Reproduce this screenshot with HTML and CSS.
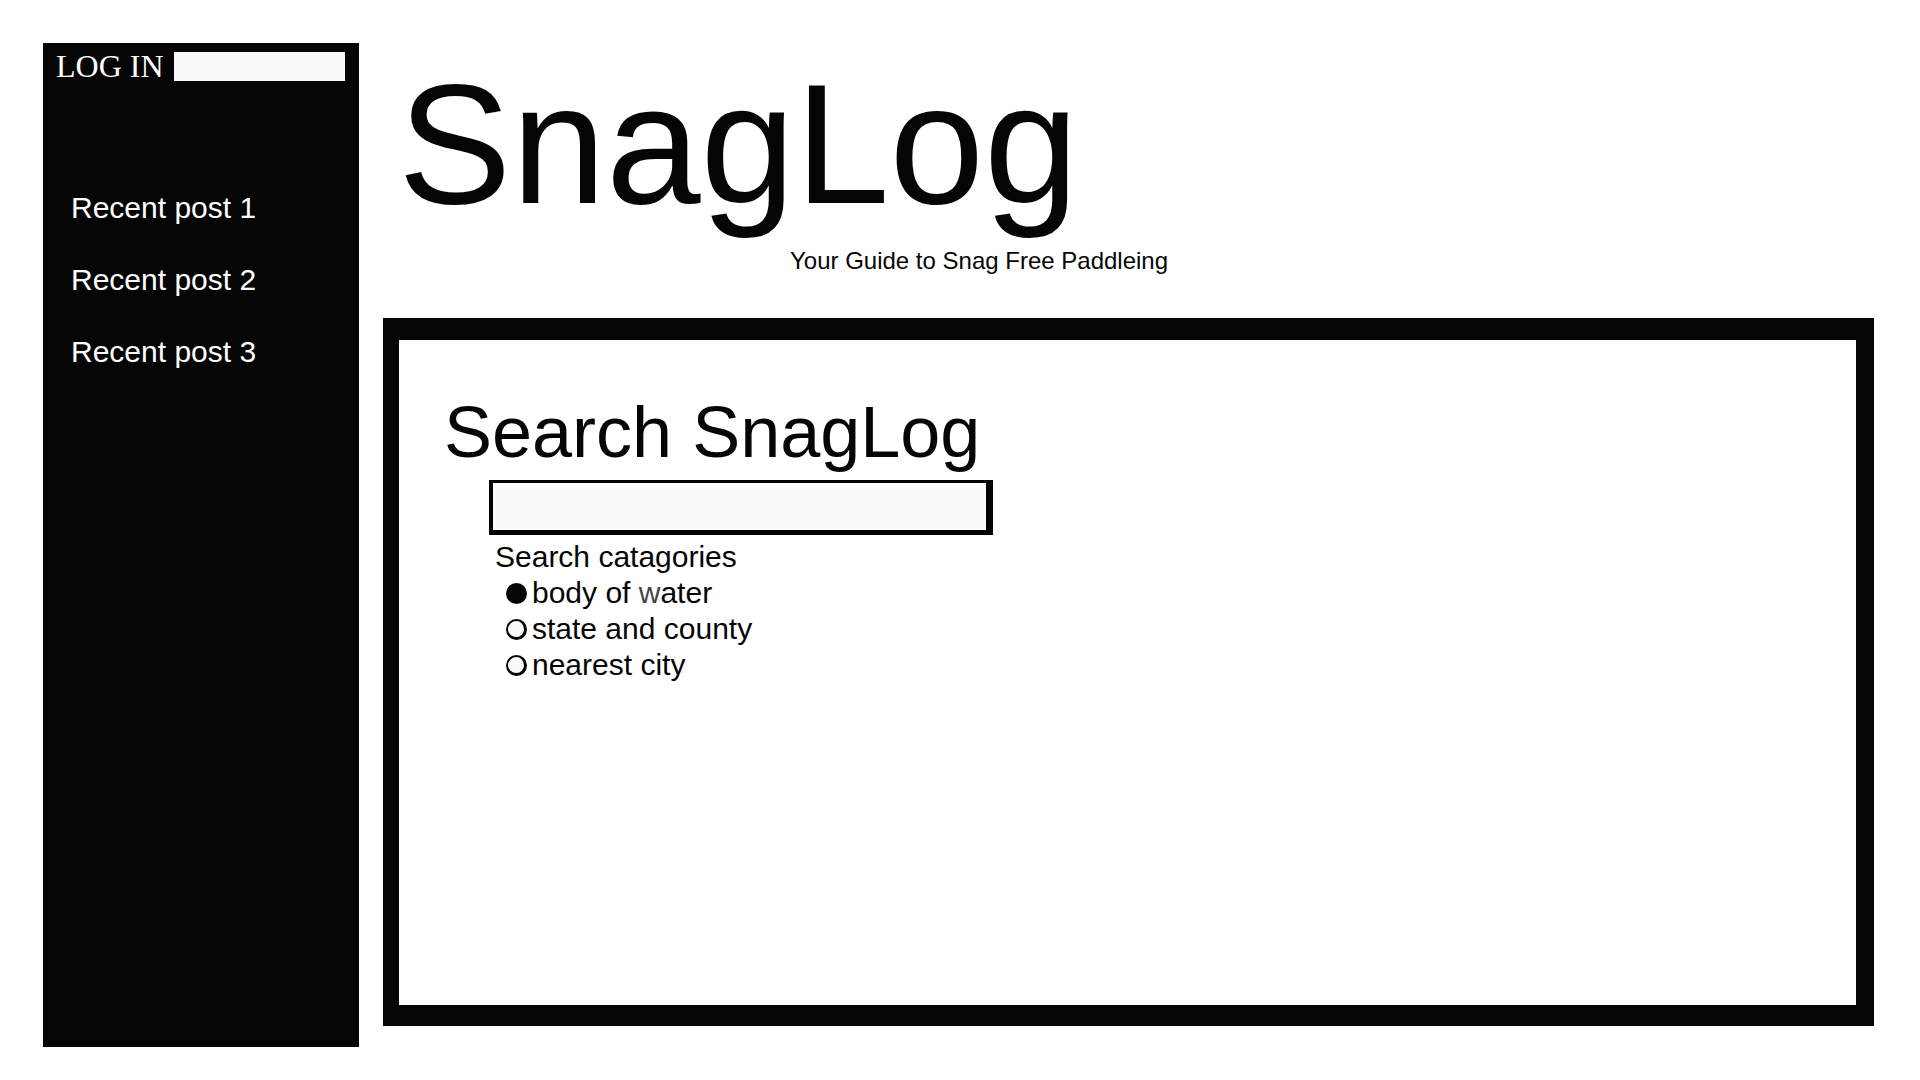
FILE: index.html
```
<!DOCTYPE html>
<html lang="en">
<head>
<meta charset="utf-8">
<meta name="viewport" content="width=device-width, initial-scale=1">
<title>SnagLog</title>
<link rel="stylesheet" href="styles.css">
</head>
<body>
<div class="page">
  <aside class="sidebar">
    <form class="login">
      <label class="login-label" for="login">LOG IN</label>
      <input class="login-input" id="login" type="text">
    </form>
    <nav class="posts">
      <a class="post" href="#">Recent post 1</a>
      <a class="post" href="#">Recent post 2</a>
      <a class="post" href="#">Recent post 3</a>
    </nav>
  </aside>
  <main class="main">
    <header class="header">
      <h1 class="title">SnagLog</h1>
      <p class="tagline">Your Guide to Snag Free Paddleing</p>
    </header>
    <form class="panel">
      <h2 class="heading"><label for="search">Search SnagLog</label></h2>
      <input class="search" id="search" type="text">
      <fieldset class="categories">
        <legend class="legend">Search catagories</legend>
        <label class="option"><input class="radio" type="radio" name="category" checked><span>body of <span class="light">w</span>ater</span></label>
        <label class="option"><input class="radio" type="radio" name="category"><span>state and county</span></label>
        <label class="option"><input class="radio" type="radio" name="category"><span>nearest city</span></label>
      </fieldset>
    </form>
  </main>
</div>
</body>
</html>
```
FILE: styles.css
```
* {
  box-sizing: border-box;
}

body {
  margin: 0;
  background: #fff;
  color: #050505;
  font-family: "Liberation Sans", Arial, sans-serif;
  font-size: 30px;
  line-height: 36px;
}

.page {
  display: grid;
  grid-template-columns: 316px 1fr;
  gap: 24px;
  min-height: 100vh;
  padding: 43px 46px 33px 43px;
}

.sidebar {
  background: #050505;
  color: #fff;
}

.login {
  display: flex;
  align-items: center;
  gap: 10px;
  padding: 9px 14px 0 13px;
}

.login-label {
  font-family: "Liberation Serif", serif;
  font-size: 32px;
  line-height: 29px;
}

.login-input {
  flex: 1;
  min-width: 0;
  height: 29px;
  padding: 0 6px;
  border: 0;
  background: #fafafa;
  font: 20px "Liberation Sans", Arial, sans-serif;
}

.posts {
  display: flex;
  flex-direction: column;
  padding: 91px 28px 0;
}

.post {
  color: inherit;
  line-height: 72px;
  text-decoration: none;
}

.main {
  display: flex;
  flex-direction: column;
  padding-bottom: 21px;
}

.header {
  padding: 11px 0 43px 15px;
}

.title {
  margin: 0;
  font-size: 170px;
  font-weight: 400;
  line-height: 180px;
}

.tagline {
  margin: 13px 0 0 392px;
  font-size: 24px;
  line-height: 28px;
}

.panel {
  flex: 1;
  padding: 52px 45px;
  border: solid #050505;
  border-width: 22px 18px 21px 16px;
}

.heading {
  margin: 0 0 8px;
  font-size: 72px;
  font-weight: 400;
  line-height: 80px;
}

.search {
  display: block;
  width: 504px;
  max-width: 100%;
  height: 55px;
  margin: 0 0 4px 45px;
  padding: 0 8px;
  border: solid #000;
  border-width: 3px 7px 5px 4px;
  background: #fbfbfb;
  font: 30px "Liberation Sans", Arial, sans-serif;
}

.categories {
  margin: 0 0 0 51px;
  padding: 0;
  border: 0;
}

.legend {
  padding: 0;
}

.option {
  display: flex;
  align-items: center;
  gap: 5px;
  padding-left: 11px;
}

.radio {
  appearance: none;
  width: 21px;
  height: 21px;
  margin: 0;
  border: solid #050505;
  border-width: 2px 3px 3px 2px;
  border-radius: 50%;
  background: #fafafa;
}

.radio:checked {
  background: #050505;
}

.light {
  color: #444;
}
```
